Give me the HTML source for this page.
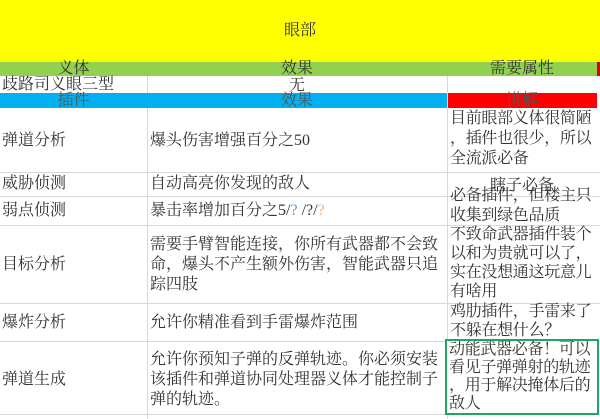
<!DOCTYPE html>
<html><head><meta charset="utf-8"><style>
body{margin:0;width:600px;height:419px;overflow:hidden;background:#fff;font-family:"Liberation Serif","Noto Serif CJK SC",serif;color:#333;font-size:16px}
div.c{position:absolute;box-sizing:border-box;line-height:20px;overflow:hidden;white-space:normal}
div.r{letter-spacing:-0.3px;line-break:anywhere;word-break:break-all}
.h{position:absolute;left:0;width:600px;height:1px;background:#d8d8d8}
.v{position:absolute;width:1px;background:#d8d8d8}
</style></head><body>
<div class="c" style="left:0;top:0;width:600px;height:62px;background:#ffff00;text-align:center;line-height:62px">眼部</div>
<div class="c" style="left:0;top:62px;width:597px;height:14px;background:#92d050;"></div>
<div class="c" style="left:597px;top:62px;width:3px;height:14px;background:#e00000;"></div>
<div class="c" style="left:0;top:59px;width:147px;text-align:center">义体</div>
<div class="c" style="left:147px;top:59px;width:300px;text-align:center">效果</div>
<div class="c" style="left:447px;top:59px;width:150px;text-align:center">需要属性</div>
<div class="c" style="left:2px;top:75px;width:147px;height:18px">歧路司义眼三型</div>
<div class="c" style="left:147px;top:76px;width:300px;height:17px;text-align:center">无</div>
<div class="c" style="left:0;top:93px;width:447px;height:15px;background:#00b0f0"></div>
<div class="c" style="left:447px;top:93px;width:150px;height:15px;background:#ff0000"></div>
<div class="c" style="left:0;top:91px;width:147px;height:17px;text-align:center;color:#555">插件</div>
<div class="c" style="left:147px;top:91px;width:300px;height:17px;text-align:center;color:#555">效果</div>
<div class="c" style="left:447px;top:91px;width:150px;height:17px;text-align:center;color:#555">讲解</div>

<div class="h" style="top:172px"></div><div class="h" style="top:196px"></div><div class="h" style="top:225px"></div><div class="h" style="top:303px"></div><div class="h" style="top:341px"></div><div class="h" style="top:414px"></div>
<div class="v" style="left:147px;top:108px;height:311px"></div><div class="v" style="left:447px;top:76px;height:343px"></div><div class="v" style="left:147px;top:76px;height:17px"></div>

<div class="c" style="left:2px;top:131px">弹道分析</div>
<div class="c" style="left:150px;top:131px">爆头伤害增强百分之50</div>
<div class="c r" style="left:450px;top:109px;width:150px;height:63px">目前眼部义体很简陋，插件也很少，所以全流派必备</div>
<div class="c" style="left:2px;top:174px">威胁侦测</div>
<div class="c" style="left:150px;top:174px">自动高亮你发现的敌人</div>
<div class="c" style="left:447px;top:176px;width:150px;text-align:center;height:20px">瞎子必备</div>
<div class="c" style="left:2px;top:201px">弱点侦测</div>
<div class="c" style="left:150px;top:201px">暴击率增加百分之5/<span style="color:#5b9bd5">?</span> /?/<span style="color:#f4b183">?</span></div>
<div class="c r" style="left:450px;top:186px;width:150px;height:39px">必备插件，但楼主只收集到绿色品质</div>
<div class="c" style="left:2px;top:255px">目标分析</div>
<div class="c" style="left:150px;top:235px;width:297px;height:68px">需要手臂智能连接，你所有武器都不会致命，爆头不产生额外伤害，智能武器只追踪四肢</div>
<div class="c r" style="left:450px;top:225px;width:150px;height:78px;line-height:19px">不致命武器插件装个以和为贵就可以了，实在没想通这玩意儿有啥用</div>
<div class="c" style="left:2px;top:313px">爆炸分析</div>
<div class="c" style="left:150px;top:313px">允许你精准看到手雷爆炸范围</div>
<div class="c r" style="left:450px;top:302px;width:150px;height:39px;line-height:19px">鸡肋插件，手雷来了不躲在想什么？</div>
<div class="c" style="left:2px;top:370px">弹道生成</div>
<div class="c" style="left:150px;top:350px;width:297px;height:64px">允许你预知子弹的反弹轨迹。你必须安装该插件和弹道协同处理器义体才能控制子弹的轨迹。</div>
<div class="c r" style="left:445px;top:339px;width:154px;height:76px;border:2px solid #21a366;padding:0 0 0 2px;background:#fff;line-height:18px">动能武器必备！可以看见子弹弹射的轨迹，用于解决掩体后的敌人</div>
</body></html>
